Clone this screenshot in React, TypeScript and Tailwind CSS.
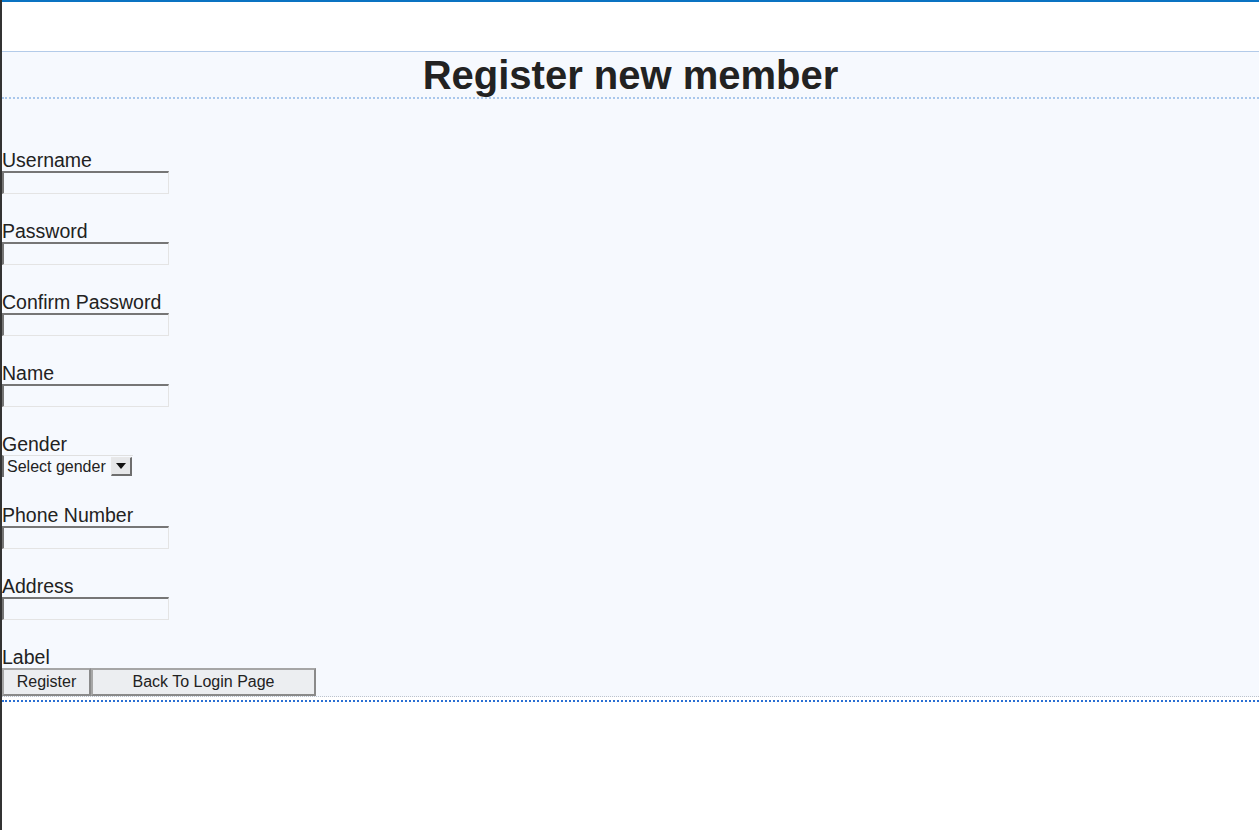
const fields = ["Username", "Password", "Confirm Password", "Name"];
const fields2 = ["Phone Number", "Address"];

const Field = ({ label }: { label: string }) => {
  return (
    <div className="mb-[27px] flex flex-col items-start">
      <label className="text-[19.5px] leading-[21px] text-[#222]">{label}</label>
      <input
        type="text"
        className="h-[23px] w-[167px] border-t-2 border-l-2 border-r border-b border-t-[#767676] border-l-[#767676] border-r-[#e4e4e4] border-b-[#e4e4e4] bg-transparent outline-none"
      />
    </div>
  );
};

const App = () => {
  return (
    <div
      className="min-h-[830px] border-l-2 border-[#333] bg-white"
      style={{ fontFamily: '"Liberation Sans", Arial, sans-serif' }}
    >
      <div className="h-[2px] bg-[#0a73c2]"></div>
      <div className="h-[50px] border-b border-[#b3cbe9] bg-white"></div>
      <div className="bg-[#f6f9fe]">
        <h1 className="h-[47px] border-b-2 border-dotted border-[#a9c7ec] text-center text-[40px] font-bold leading-[46px] text-[#222]">
          Register new member
        </h1>
        <form className="border-b border-dotted border-[#bcc3cc] pt-[51px]">
          {fields.map((f) => (
            <Field key={f} label={f} />
          ))}
          <div className="mb-[28px] flex flex-col items-start">
            <label className="text-[19.5px] leading-[21px] text-[#222]">Gender</label>
            <div className="flex h-[22px] w-[131px] items-stretch border-l-2 border-t border-[#6d6d6d] border-t-[#e0e0e0] text-[16px] text-[#222]">
              <span className="flex flex-1 items-center pl-[3px] leading-none">Select gender</span>
              <span className="m-[1px] flex w-[21px] items-center justify-center border border-b-2 border-r-2 border-[#e8e8e8] border-b-[#6e6e6e] border-r-[#6e6e6e] bg-[#e6e7e9]">
                <svg width="10" height="6" viewBox="0 0 10 6">
                  <path d="M0 0 L10 0 L5 6 Z" fill="#111" />
                </svg>
              </span>
            </div>
          </div>
          {fields2.map((f) => (
            <Field key={f} label={f} />
          ))}
          <div className="flex flex-col items-start">
            <label className="text-[19.5px] leading-[21px] text-[#222]">Label</label>
            <div className="flex">
              <button
                type="button"
                className="h-[28px] w-[89px] border-2 border-[#a6a6a6] border-r-[#8a8a8a] border-b-[#8a8a8a] bg-[#eceef1] text-[16px] text-[#222]"
              >
                Register
              </button>
              <button
                type="button"
                className="h-[28px] w-[225px] border-2 border-[#a6a6a6] border-r-[#8a8a8a] border-b-[#8a8a8a] bg-[#eceef1] text-[16px] text-[#222]"
              >
                Back To Login Page
              </button>
            </div>
          </div>
        </form>
      </div>
      <div className="mt-[3px] border-b-2 border-dotted border-[#2a6fd3]"></div>
    </div>
  );
};

export default App;
